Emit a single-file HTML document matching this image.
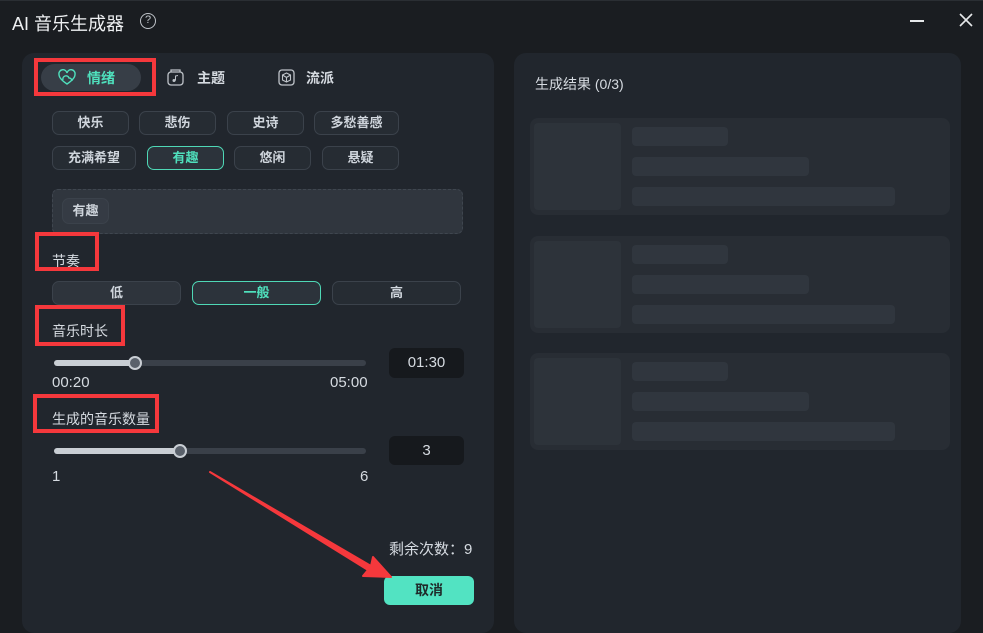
<!DOCTYPE html>
<html><head><meta charset="utf-8"><style>
*{margin:0;padding:0;box-sizing:border-box}
body{width:983px;height:620px;background:#1a1d21;font-family:"Liberation Sans","Noto Sans CJK SC",sans-serif;color:#d6dbe1;position:relative;overflow:hidden}
.a{position:absolute}
.panel{background:#21262d;border-radius:12px}
.chip{position:absolute;height:24px;border:1px solid #3b424b;border-radius:7px;background:#262c33;font-size:13px;font-weight:bold;color:#cfd5dc;text-align:center;line-height:22px}
.sel{border-color:#4fd8b6;color:#4fe0bd;background:#2c333b}
.red{position:absolute;border:4px solid #f5383c}
.lbl{position:absolute;font-size:14px;color:#d6dbe1}
.card{position:absolute;left:530px;width:420px;height:97px;background:#282d34;border-radius:8px}
.sk{position:absolute;background:#30363e;border-radius:4px}
.box{position:absolute;background:#16191d;border-radius:6px;font-size:15px;text-align:center;color:#d6dbe1}
</style></head><body>
<div class="a" style="left:0;top:0;width:983px;height:1px;background:#2a2e33"></div>
<div class="a" style="left:12px;top:10px;font-size:18px;color:#eef0f2">AI 音乐生成器</div>
<div class="a" style="left:140px;top:13px;width:16px;height:16px;border:1.5px solid #bfc4ca;border-radius:50%;font-size:11px;text-align:center;line-height:13px;color:#bfc4ca">?</div>
<div class="a" style="left:910px;top:20px;width:14px;height:2px;background:#e6e8ea"></div>
<svg class="a" style="left:959px;top:13px" width="14" height="14"><path d="M1 1L13 13M13 1L1 13" stroke="#e6e8ea" stroke-width="1.6"/></svg>

<div class="a panel" style="left:22px;top:53px;width:472px;height:580px"></div>
<div class="a panel" style="left:514px;top:53px;width:447px;height:580px"></div>

<div class="a" style="left:41px;top:64px;width:100px;height:27px;border-radius:14px;background:#373e47"></div>
<svg class="a" style="left:58px;top:69px" width="18" height="17" viewBox="0 0 18 17"><path d="M9 15C3 11 1 8 1 5.5A4 4 0 0 1 9 4A4 4 0 0 1 17 5.5C17 8 15 11 9 15Z" fill="none" stroke="#4fe0bd" stroke-width="1.4"/><path d="M5 11A3 3 0 0 1 11 9A3 3 0 0 1 14 12" fill="none" stroke="#4fe0bd" stroke-width="1.4"/></svg>
<div class="a" style="left:87px;top:68px;font-size:14px;font-weight:bold;color:#4fe0bd">情绪</div>
<svg class="a" style="left:167px;top:69px" width="17" height="17"><rect x="1" y="3" width="15" height="13" rx="3" fill="none" stroke="#bfc4ca" stroke-width="1.3"/><path d="M4 3V1H13V3" fill="none" stroke="#bfc4ca" stroke-width="1.3"/><circle cx="7" cy="11.5" r="1.5" fill="#bfc4ca"/><path d="M8.5 11.5V7L11 6.5" stroke="#bfc4ca" fill="none"/></svg>
<div class="a" style="left:197px;top:68px;font-size:14px;font-weight:bold;color:#d6dbe1">主题</div>
<svg class="a" style="left:278px;top:69px" width="17" height="17"><rect x="1" y="1" width="15" height="15" rx="3" fill="none" stroke="#bfc4ca" stroke-width="1.3"/><path d="M8.5 4L12.5 6V11L8.5 13L4.5 11V6Z M4.5 6L8.5 8.5L12.5 6 M8.5 8.5V13" fill="none" stroke="#bfc4ca" stroke-width="1.1"/></svg>
<div class="a" style="left:306px;top:68px;font-size:14px;font-weight:bold;color:#d6dbe1">流派</div>
<div class="red" style="left:34px;top:58px;width:122px;height:38px"></div>

<div class="chip" style="left:52px;top:111px;width:77px">快乐</div>
<div class="chip" style="left:139px;top:111px;width:77px">悲伤</div>
<div class="chip" style="left:227px;top:111px;width:77px">史诗</div>
<div class="chip" style="left:314px;top:111px;width:85px">多愁善感</div>
<div class="chip" style="left:52px;top:146px;width:84px">充满希望</div>
<div class="chip sel" style="left:147px;top:146px;width:77px">有趣</div>
<div class="chip" style="left:234px;top:146px;width:77px">悠闲</div>
<div class="chip" style="left:322px;top:146px;width:77px">悬疑</div>

<div class="a" style="left:52px;top:189px;width:411px;height:45px;background:#30363e;border:1px dashed #3f464f;border-radius:6px"></div>
<div class="chip" style="left:62px;top:198px;width:47px;height:26px;background:#353b44;line-height:24px;font-size:13px">有趣</div>

<div class="lbl" style="left:52px;top:251px">节奏</div>
<div class="red" style="left:35px;top:232px;width:64px;height:39px"></div>
<div class="chip" style="left:52px;top:281px;width:129px;background:#2e343c">低</div>
<div class="chip sel" style="left:192px;top:281px;width:129px">一般</div>
<div class="chip" style="left:332px;top:281px;width:129px">高</div>

<div class="lbl" style="left:52px;top:321px">音乐时长</div>
<div class="red" style="left:35px;top:305px;width:90px;height:41px"></div>
<div class="a" style="left:54px;top:360px;width:312px;height:6px;border-radius:3px;background:#3a4049"></div>
<div class="a" style="left:54px;top:360px;width:81px;height:6px;border-radius:3px;background:#c9ced4"></div>
<div class="a" style="left:128px;top:356px;width:14px;height:14px;border-radius:50%;background:#5a616b;border:2px solid #c9ced4"></div>
<div class="lbl" style="left:52px;top:374px;font-size:15px">00:20</div>
<div class="lbl" style="left:330px;top:374px;font-size:15px">05:00</div>
<div class="box" style="left:389px;top:348px;width:75px;height:30px;line-height:30px">01:30</div>

<div class="lbl" style="left:52px;top:409px">生成的音乐数量</div>
<div class="red" style="left:33px;top:394px;width:126px;height:39px"></div>
<div class="a" style="left:54px;top:448px;width:312px;height:6px;border-radius:3px;background:#3a4049"></div>
<div class="a" style="left:54px;top:448px;width:126px;height:6px;border-radius:3px;background:#c9ced4"></div>
<div class="a" style="left:173px;top:444px;width:14px;height:14px;border-radius:50%;background:#5a616b;border:2px solid #c9ced4"></div>
<div class="lbl" style="left:52px;top:468px;font-size:15px">1</div>
<div class="lbl" style="left:360px;top:468px;font-size:15px">6</div>
<div class="box" style="left:389px;top:436px;width:75px;height:29px;line-height:29px">3</div>

<div class="lbl" style="left:389px;top:538px;font-size:15px">剩余次数：9</div>
<div class="a" style="left:384px;top:576px;width:90px;height:29px;border-radius:6px;background:#52e3c2;color:#1f2a2a;font-weight:bold;font-size:14px;text-align:center;line-height:29px">取消</div>
<svg class="a" style="left:0;top:0" width="983" height="620"><path d="M210 472L371 566L373 557L391 577L363 576L368 570Z" fill="#f5383c" stroke="#f5383c" stroke-width="2" stroke-linejoin="round"/></svg>

<div class="lbl" style="left:535px;top:74px;font-size:14px">生成结果 (0/3)</div>
<div class="card" style="top:118px"><div class="sk" style="left:4px;top:5px;width:87px;height:87px;background:#2d333a"></div><div class="sk" style="left:102px;top:9px;width:96px;height:19px"></div><div class="sk" style="left:102px;top:39px;width:177px;height:19px"></div><div class="sk" style="left:102px;top:69px;width:263px;height:19px"></div></div>
<div class="card" style="top:236px"><div class="sk" style="left:4px;top:5px;width:87px;height:87px;background:#2d333a"></div><div class="sk" style="left:102px;top:9px;width:96px;height:19px"></div><div class="sk" style="left:102px;top:39px;width:177px;height:19px"></div><div class="sk" style="left:102px;top:69px;width:263px;height:19px"></div></div>
<div class="card" style="top:353px"><div class="sk" style="left:4px;top:5px;width:87px;height:87px;background:#2d333a"></div><div class="sk" style="left:102px;top:9px;width:96px;height:19px"></div><div class="sk" style="left:102px;top:39px;width:177px;height:19px"></div><div class="sk" style="left:102px;top:69px;width:263px;height:19px"></div></div>
</body></html>
